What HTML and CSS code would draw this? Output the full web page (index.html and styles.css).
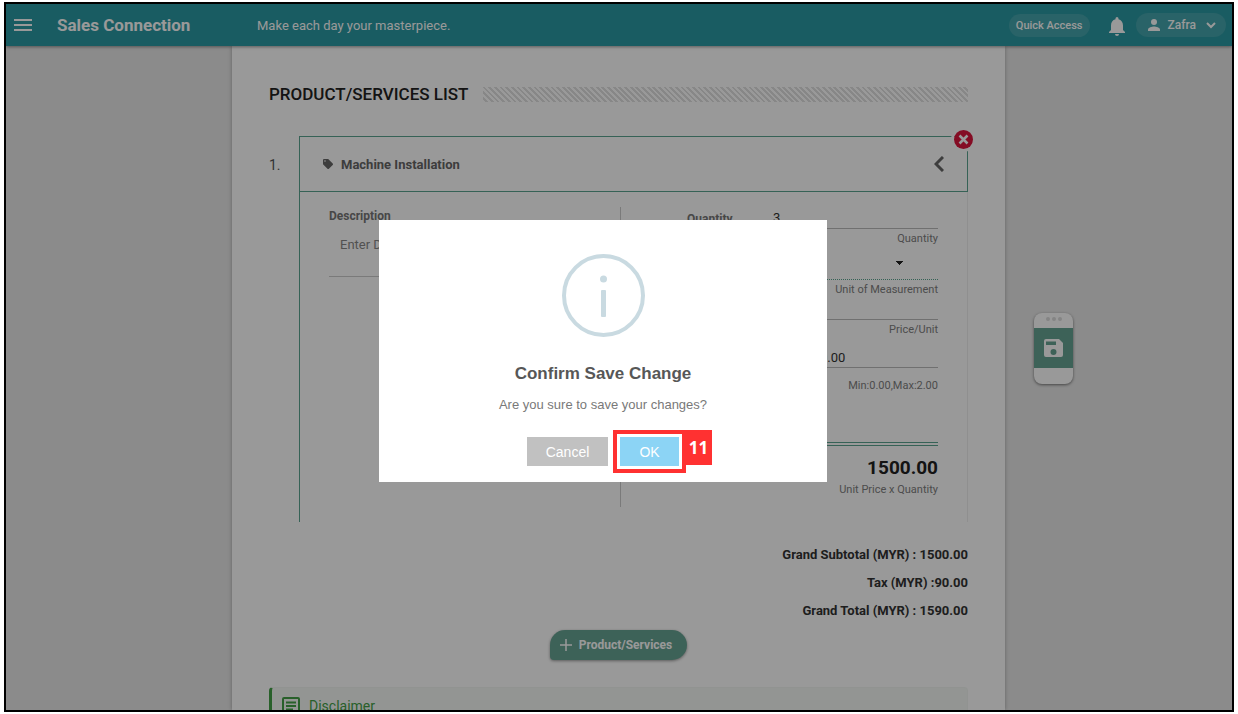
FILE: index.html
```html
<!DOCTYPE html>
<html lang="en">
<head>
<meta charset="utf-8">
<title>Sales Connection</title>
<meta name="viewport" content="width=device-width, initial-scale=1">
<link rel="stylesheet" href="styles.css">
</head>
<body>
<div class="frame">
  <header class="topbar">
    <button class="icon-btn" type="button" aria-label="Menu">
      <svg width="18" height="12" viewBox="0 0 18 12" fill="currentColor"><path d="M0 0h18v2H0zM0 5h18v2H0zM0 10h18v2H0z"/></svg>
    </button>
    <a class="brand" href="#">Sales Connection</a>
    <p class="motto">Make each day your masterpiece.</p>
    <button class="pill" type="button">Quick Access</button>
    <button class="icon-btn bell" type="button" aria-label="Notifications">
      <svg width="16" height="19" viewBox="0 0 16 19" fill="currentColor"><path d="M8 19a2 2 0 0 0 2-2H6a2 2 0 0 0 2 2zM14 13V8.500C14 5.400 12.300 2.900 9.500 2.200V1.500a1.500 1.500 0 0 0-3 0v.7C3.600 2.900 2 5.400 2 8.500V13L0 15v1h16v-1z"/></svg>
    </button>
    <button class="pill user" type="button">
      <svg width="12" height="12" viewBox="0 0 12 12" fill="currentColor"><circle cx="6" cy="3" r="3"/><path d="M0 12v-1.500C0 8.500 4 7.500 6 7.500s6 1 6 3V12z"/></svg>
      <span>Zafra</span>
      <svg width="10" height="7" viewBox="0 0 10 7" fill="none" stroke="currentColor" stroke-width="2"><path d="M1 1l4 4 4-4"/></svg>
    </button>
  </header>

  <div class="workspace">
    <main class="sheet">
      <div class="heading">
        <h1>PRODUCT/SERVICES LIST</h1>
        <span class="hatch"></span>
      </div>

      <section class="item">
        <span class="item-no">1.</span>
        <div class="item-box">
          <div class="item-head">
            <svg width="10" height="10" viewBox="0 0 10 10" fill="currentColor"><path fill-rule="evenodd" d="M0 1a1 1 0 0 1 1-1h4.200l4.500 4.500a1 1 0 0 1 0 1.400L5.900 9.700a1 1 0 0 1-1.400 0L0 5.200zM2 1.200a.8.8 0 1 0 0 1.600.8.8 0 0 0 0-1.600z"/></svg>
            <h2>Machine Installation</h2>
            <button class="icon-btn chevron" type="button" aria-label="Collapse">
              <svg width="10" height="16" viewBox="0 0 10 16" fill="none" stroke="currentColor" stroke-width="3"><path d="M9 1L2 8l7 7"/></svg>
            </button>
            <button class="remove" type="button" aria-label="Remove item">
              <svg width="19" height="19" viewBox="0 0 19 19"><circle cx="9.500" cy="9.500" r="9.500" fill="#dc143c"/><path d="M5.500 5.500l8 8M13.500 5.500l-8 8" stroke="#fff" stroke-width="2.500"/></svg>
            </button>
          </div>
          <div class="item-body">
            <div class="desc">
              <label for="desc">Description</label>
              <input id="desc" type="text" placeholder="Enter Description">
            </div>
            <div class="figures">
              <label class="fig-label" for="qty">Quantity</label>
              <div class="fields">
                <div class="field f-qty"><input id="qty" type="text" value="3"><span class="hint">Quantity</span></div>
                <div class="field f-unit"><select id="unit"><option></option></select><label class="hint" for="unit">Unit of Measurement</label></div>
                <div class="field f-price"><input id="price" type="text"><label class="hint" for="price">Price/Unit</label></div>
                <div class="field f-disc"><input id="disc" type="text" value="0.00" aria-label="Discount"><span class="hint">Min:0.00,Max:2.00</span></div>
              </div>
              <div class="line-total">
                <strong>1500.00</strong>
                <span class="hint">Unit Price x Quantity</span>
              </div>
            </div>
          </div>
        </div>
      </section>

      <div class="totals">
        <p>Grand Subtotal (MYR) : 1500.00</p>
        <p>Tax (MYR) :90.00</p>
        <p>Grand Total (MYR) : 1590.00</p>
      </div>

      <button class="add" type="button">
        <svg width="12" height="12" viewBox="0 0 12 12" stroke="currentColor" stroke-width="1.500"><path d="M6 0v12M0 6h12"/></svg>
        <span>Product/Services</span>
      </button>

      <section class="disclaimer">
        <svg width="18" height="18" viewBox="0 0 18 18" fill="none" stroke="currentColor" stroke-width="2"><rect x="1" y="1" width="16" height="16" rx="1"/><path d="M4 5.500h10M4 9h10M4 12.500h7"/></svg>
        <h2>Disclaimer</h2>
      </section>
    </main>

    <aside class="dock">
      <span class="dots"><i></i><i></i><i></i></span>
      <button class="save" type="button" aria-label="Save">
        <svg width="19" height="18" viewBox="0 0 19 18"><path fill="currentColor" fill-rule="evenodd" d="M2 0h13l4 4v12a2 2 0 0 1-2 2H2a2 2 0 0 1-2-2V2a2 2 0 0 1 2-2zM2 2.500v3.500h10V2.500zM9.500 10a3 3 0 1 0 0 6 3 3 0 0 0 0-6z"/></svg>
      </button>
    </aside>
  </div>

  <div class="overlay">
    <div class="dialog" role="dialog" aria-labelledby="dlg-title">
      <svg class="info" width="83" height="83" viewBox="0 0 83 83"><circle cx="41.500" cy="41.500" r="39.500" fill="none" stroke="#c9dae1" stroke-width="4"/><circle cx="41.500" cy="25" r="3.500" fill="#c9dae1"/><rect x="39" y="36" width="5" height="27" rx="1" fill="#c9dae1"/></svg>
      <h2 id="dlg-title">Confirm Save Change</h2>
      <p>Are you sure to save your changes?</p>
      <div class="actions">
        <button class="btn cancel" type="button">Cancel</button>
        <div class="marked">
          <button class="btn ok" type="button">OK</button>
          <span class="marker">11</span>
        </div>
      </div>
    </div>
  </div>
</div>
</body>
</html>
```

FILE: styles.css
```css
* { box-sizing: border-box; }

body {
  margin: 0;
  height: 100vh;
  padding: 2px 4px;
  background: #fff;
  font-family: Roboto, "Liberation Sans", sans-serif;
  font-size: 13px;
  color: #333;
}

h1, h2, p { margin: 0; }

button, input, select { font: inherit; color: inherit; }

button { border: 0; padding: 0; background: none; }

svg { display: block; flex: none; }

.frame {
  position: relative;
  height: 100%;
  border: 2px solid #000;
  overflow: hidden;
  display: flex;
  flex-direction: column;
  background: #e8e8e8;
}

.topbar {
  position: relative;
  z-index: 1;
  flex: none;
  display: flex;
  align-items: center;
  height: 42px;
  padding: 0 6px 0 8px;
  background: #2b99a3;
  color: #fff;
  box-shadow: 0 1px 3px rgba(0, 0, 0, 0.4);
}

.brand {
  width: 200px;
  margin-left: 25px;
  color: inherit;
  font-size: 17px;
  font-weight: 700;
  text-decoration: none;
}

.motto { flex: 1; }

.pill {
  height: 23px;
  padding: 0 7px;
  border-radius: 12px;
  background: #45a5ad;
  font-size: 11px;
  font-weight: 500;
}

.bell { margin: 3px 11px 0 19px; }

.user {
  display: flex;
  align-items: center;
  height: 24px;
  padding: 0 10px 0 12px;
  font-size: 12px;
}

.user span { margin: 0 10px 0 8px; }

.workspace {
  flex: 1;
  min-height: 0;
  display: grid;
  grid-template-columns: 226px 1fr 227px;
}

.sheet {
  grid-column: 2;
  min-height: 0;
  padding: 38px 37px 0;
  background: #fff;
  box-shadow: 0 0 4px rgba(0, 0, 0, 0.3);
}

.heading {
  display: flex;
  align-items: center;
  gap: 15px;
}

.heading h1 {
  font-size: 17px;
  font-weight: 500;
  line-height: 20px;
  color: #222;
}

.hatch {
  flex: 1;
  height: 15px;
  background: repeating-linear-gradient(45deg, #fff 0 2px, #e2e2e2 2px 4px);
}

.item {
  display: grid;
  grid-template-columns: 30px 1fr;
  margin-top: 32px;
}

.item-no {
  padding-top: 21px;
  font-size: 14px;
  color: #555;
}

.item-box {
  border-left: 1px solid #5aa38f;
  border-right: 1px solid #eee;
}

.item-head {
  position: relative;
  display: flex;
  align-items: center;
  height: 56px;
  padding: 0 23px;
  margin-right: -1px;
  border: solid #5aa38f;
  border-width: 1px 1px 1px 0;
  color: #666;
}

.item-head h2 {
  flex: 1;
  margin-left: 8px;
  font-size: 13px;
  font-weight: 700;
}

.remove {
  position: absolute;
  top: -10px;
  right: -9px;
  border: 3px solid #fff;
  border-radius: 50%;
}

.item-body {
  display: grid;
  grid-template-columns: 292px 1fr;
  padding: 15px 29px;
}

.desc {
  border-right: 1px solid #ccc;
  color: #777;
  height: 300px;
}

.desc label {
  display: block;
  font-size: 12px;
  font-weight: 700;
  line-height: 18px;
}

.desc input {
  width: 90%;
  height: 52px;
  padding: 0 0 12px 11px;
  border: 0;
  border-bottom: 1px solid #ccc;
  background: none;
}

.desc input::placeholder { color: #888; opacity: 1; }

.figures {
  display: grid;
  grid-template-columns: 86px 1fr;
  grid-template-rows: 235px auto;
  padding-left: 66px;
}

.fig-label {
  font-size: 12px;
  font-weight: 700;
  line-height: 24px;
  color: #777;
}

.field {
  display: flex;
  flex-direction: column;
  align-items: flex-end;
}

.field input, .field select {
  width: 100%;
  border: 0;
  border-bottom: 1px solid #bbb;
  padding: 0;
  background: none;
}

.hint {
  font-size: 11px;
  line-height: 19px;
  color: #808080;
}

.f-qty input { height: 22px; }

.field select {
  appearance: none;
  height: 32px;
  border-bottom: 1px dotted #5aa38f;
  background:
    linear-gradient(45deg, transparent 50%, #222 50%) no-repeat right 38px top 13px / 4px 4px,
    linear-gradient(-45deg, transparent 50%, #222 50%) no-repeat right 34px top 13px / 4px 4px;
}

.f-price input { height: 21px; }

.f-disc input {
  height: 29px;
  padding: 8px 0 0 47px;
}

.f-disc .hint { line-height: 36px; }

.line-total {
  grid-column: 1 / -1;
  display: flex;
  flex-direction: column;
  align-items: flex-end;
  border-top: 4px double #5aa38f;
  padding-top: 10px;
}

.line-total strong {
  font-size: 19px;
  line-height: 24px;
  color: #222;
}

.totals {
  margin-top: 19px;
  text-align: right;
  font-weight: 700;
  line-height: 28px;
}

.add {
  display: flex;
  align-items: center;
  gap: 7px;
  height: 30px;
  margin: 5px auto 0;
  padding: 0 15px 0 10px;
  border-radius: 15px 15px 15px 4px;
  background: #67a393;
  color: #fff;
  font-size: 12px;
  font-weight: 700;
  box-shadow: 0 1px 3px rgba(0, 0, 0, 0.4);
}

.disclaimer {
  display: flex;
  align-items: center;
  gap: 9px;
  height: 70px;
  margin-top: 27px;
  padding: 0 10px 32px;
  border: 1px solid #f2f6f2;
  border-left: 3px solid #43a047;
  border-radius: 4px;
  background: #f5f9f5;
  color: #43a047;
}

.disclaimer h2 { font-size: 14px; font-weight: 400; }

.dock {
  grid-column: 3;
  width: 39px;
  height: 71px;
  margin: 267px 0 0 29px;
  border-radius: 8px;
  background: #fff;
  box-shadow: 0 1px 3px rgba(0, 0, 0, 0.5);
}

.dots {
  display: flex;
  align-items: center;
  justify-content: center;
  gap: 2px;
  height: 15px;
  padding-bottom: 4px;
}

.dots i {
  width: 4px;
  height: 4px;
  border-radius: 50%;
  background: #ddd;
}

.save {
  display: grid;
  place-items: center;
  width: 100%;
  height: 40px;
  background: #67a393;
  color: #fff;
}

.overlay {
  position: absolute;
  inset: 0;
  z-index: 2;
  display: flex;
  align-items: center;
  justify-content: center;
  padding: 0 32px 12px 0;
  background: rgba(0, 0, 0, 0.4);
}

.dialog {
  display: flex;
  flex-direction: column;
  align-items: center;
  width: 448px;
  padding: 34px 16px 16px;
  background: #fff;
  font-family: "Liberation Sans", Arial, sans-serif;
}

.dialog h2 {
  margin-top: 26px;
  font-size: 17px;
  line-height: 22px;
  color: #575757;
}

.dialog p {
  margin-top: 10px;
  font-size: 13px;
  line-height: 20px;
  color: #797979;
}

.actions {
  display: flex;
  align-items: center;
  gap: 12px;
  margin-top: 22px;
}

.btn {
  display: block;
  height: 29px;
  color: #fff;
  font-size: 14px;
}

.cancel { width: 81px; background: #c1c1c1; }

.ok { width: 59px; background: #8cd4f5; }

.marked { position: relative; }

.marked::before {
  content: "";
  position: absolute;
  inset: -7px;
  border: 4px solid #ff3131;
}

.marker {
  position: absolute;
  top: -7px;
  left: 65px;
  width: 27px;
  background: #ff3131;
  color: #fff;
  font-family: "Open Sans", sans-serif;
  font-size: 17px;
  font-weight: 700;
  line-height: 35px;
  text-align: center;
}
```
